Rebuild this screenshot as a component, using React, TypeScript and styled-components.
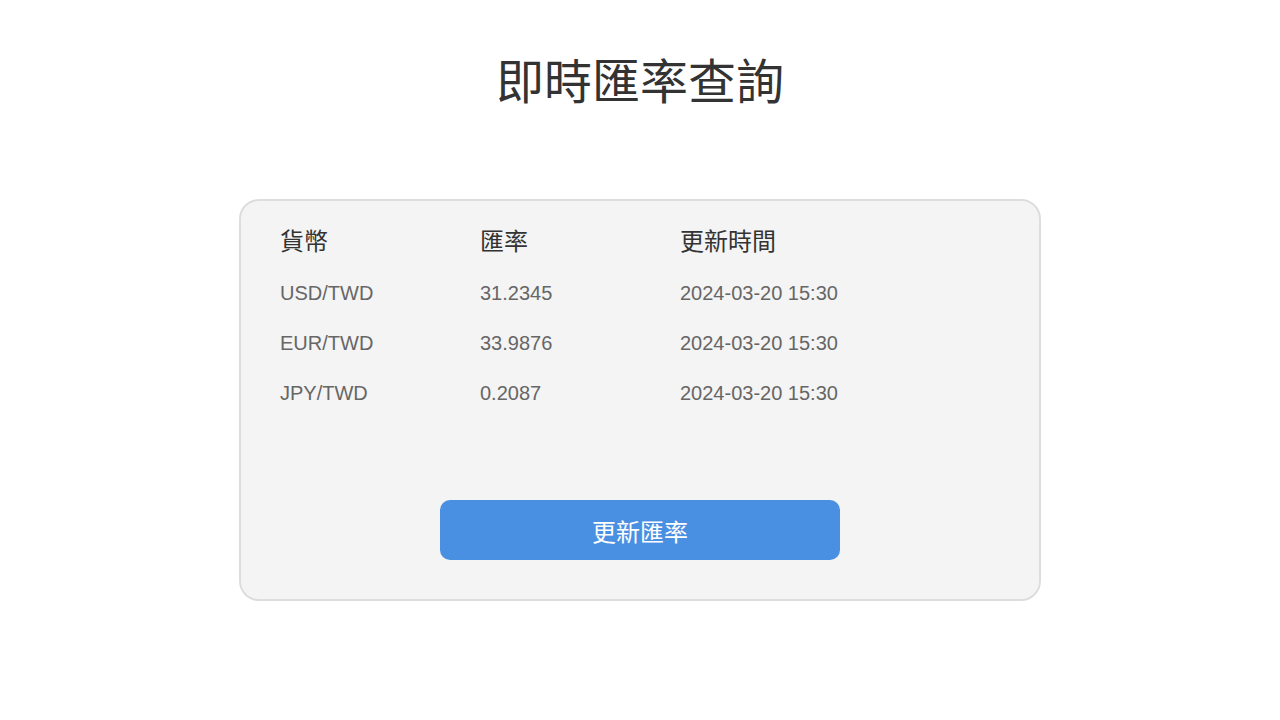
import React from "react";
import styled, { createGlobalStyle } from "styled-components";

const Global = createGlobalStyle`
  html, body { margin: 0; padding: 0; background: #ffffff; }
  body { font-family: "Liberation Sans", "Noto Sans CJK TC", Arial, sans-serif; }
`;

const Page = styled.div`
  display: flex;
  flex-direction: column;
  align-items: center;
  padding-top: 48px;
`;

const Title = styled.h1`
  margin: 0 0 81px;
  font-size: 48px;
  line-height: 70px;
  font-weight: normal;
  color: #333333;
  font-family: "Liberation Sans", "Noto Sans CJK TC", sans-serif;
`;

const Card = styled.div`
  box-sizing: border-box;
  width: 802px;
  height: 402px;
  border: 2px solid #dddddd;
  border-radius: 20px;
  background: #f4f4f4;
  padding: 20px 39px 39px;
  display: flex;
  flex-direction: column;
`;

const Table = styled.div`
  display: grid;
  grid-template-columns: 200px 200px 200px;
`;

const HeadCell = styled.div`
  font-size: 24px;
  line-height: 42px;
  height: 42px;
  color: #333333;
  margin-bottom: 5px;
`;

const Cell = styled.div`
  font-size: 20px;
  line-height: 50px;
  height: 50px;
  color: #666666;
`;

const Footer = styled.div`
  margin-top: auto;
  display: flex;
  justify-content: center;
`;

const Button = styled.button`
  width: 400px;
  height: 60px;
  border: none;
  border-radius: 10px;
  background: #4a90e2;
  color: #ffffff;
  font-size: 24px;
  font-family: "Liberation Sans", "Noto Sans CJK TC", sans-serif;
  cursor: pointer;
`;

const rows = [
  ["USD/TWD", "31.2345", "2024-03-20 15:30"],
  ["EUR/TWD", "33.9876", "2024-03-20 15:30"],
  ["JPY/TWD", "0.2087", "2024-03-20 15:30"],
];

export default function App() {
  return (
    <Page>
      <Global />
      <Title>即時匯率查詢</Title>
      <Card>
        <Table>
          <HeadCell>貨幣</HeadCell>
          <HeadCell>匯率</HeadCell>
          <HeadCell>更新時間</HeadCell>
          {rows.map((r) =>
            r.map((c, i) => <Cell key={r[0] + i}>{c}</Cell>)
          )}
        </Table>
        <Footer>
          <Button>更新匯率</Button>
        </Footer>
      </Card>
    </Page>
  );
}
